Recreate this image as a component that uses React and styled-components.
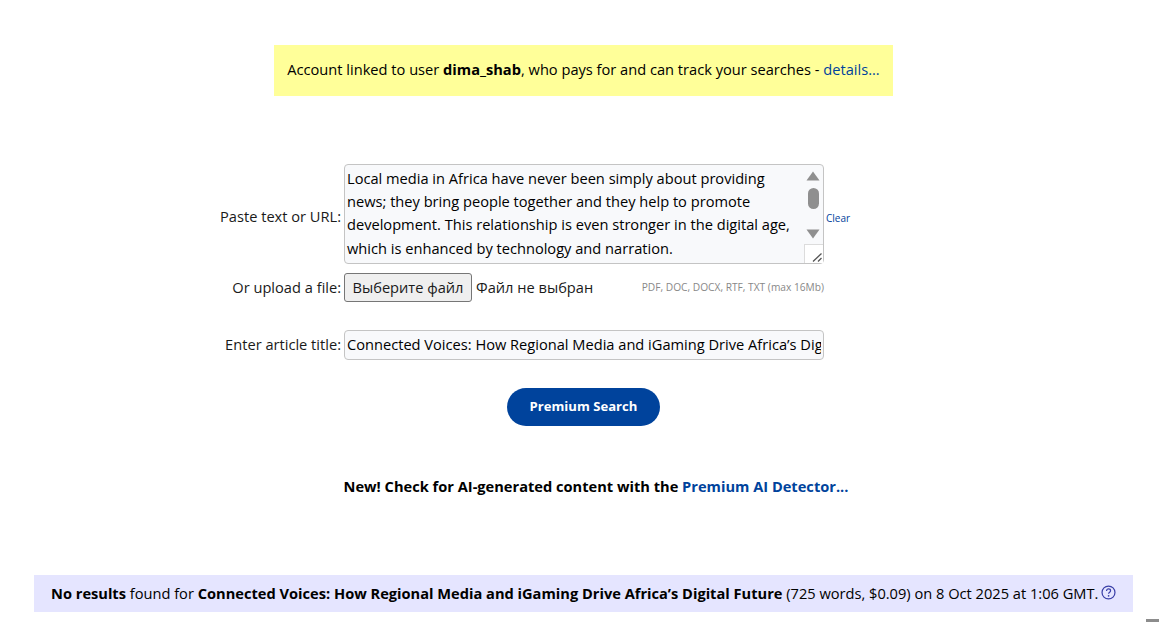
import React from "react";
import styled, { createGlobalStyle } from "styled-components";

const articleText =
  "Local media in Africa have never been simply about providing news; they bring people together and they help to promote development. This relationship is even stronger in the digital age, which is enhanced by technology and narration.\n\nAcross the continent, regional outlets keep communities informed.";

const App = () => {
  return (
    <>
      <GlobalStyle />
      <Page>
        <Notice>
          <span>
            Account linked to user <b>dima_shab</b>, who pays for and can track
            your searches - <NoticeLink href="#">details...</NoticeLink>
          </span>
        </Notice>

        <SearchForm onSubmit={(e) => e.preventDefault()}>
          <PasteLabel>Paste text or URL:</PasteLabel>
          <TextAreaWrap>
            <TextArea defaultValue={articleText} spellCheck={false} />
            <ScrollBar>
              <svg width="14" height="10" viewBox="0 0 14 10">
                <path d="M7 0.5 L13.5 9.5 H0.5 Z" fill="#8f8f8f" />
              </svg>
              <ScrollThumb />
              <ScrollSpacer />
              <svg width="14" height="10" viewBox="0 0 14 10">
                <path d="M0.5 0.5 H13.5 L7 9.5 Z" fill="#8f8f8f" />
              </svg>
            </ScrollBar>
            <ResizeCorner>
              <svg width="11" height="11" viewBox="0 0 11 11">
                <path
                  d="M1 9.5 L9.5 1.5 M6 9.5 L9.5 6"
                  stroke="#555"
                  strokeWidth="1.3"
                  fill="none"
                />
              </svg>
            </ResizeCorner>
          </TextAreaWrap>
          <ClearLink href="#">Clear</ClearLink>

          <UploadLabel>Or upload a file:</UploadLabel>
          <FileRow>
            <FileButton type="button">Выберите файл</FileButton>
            <FileName>Файл не выбран</FileName>
            <FileHint>PDF, DOC, DOCX, RTF, TXT (max 16Mb)</FileHint>
          </FileRow>
          <span />

          <TitleLabel>Enter article title:</TitleLabel>
          <TitleInput
            type="text"
            defaultValue="Connected Voices: How Regional Media and iGaming Drive Africa’s Digital Future"
          />
          <span />

          <SubmitButton type="submit">Premium Search</SubmitButton>
        </SearchForm>

        <Promo>
          New! Check for AI-generated content with the{" "}
          <PromoLink href="#">Premium AI Detector...</PromoLink>
        </Promo>

        <ResultBar>
          <span>
            <b>No results</b> found for{" "}
            <b>Connected Voices: How Regional Media and iGaming Drive Africa’s Digital Future</b>{" "}
            (725 words, $0.09) on 8 Oct 2025 at 1:06 GMT.
          </span>
          <HelpIcon viewBox="0 0 16 16" aria-hidden="true">
            <circle cx="8" cy="8" r="6.9" fill="none" stroke="#3a3fa8" strokeWidth="1.3" />
            <path
              d="M5.9 6.4 C5.9 5 7 4.2 8 4.2 C9.3 4.2 10.2 5 10.2 6.1 C10.2 7.6 8.1 7.7 8.1 9.4"
              fill="none"
              stroke="#3a3fa8"
              strokeWidth="1.3"
            />
            <circle cx="8.1" cy="11.5" r="0.9" fill="#3a3fa8" />
          </HelpIcon>
        </ResultBar>
      </Page>
      <CornerMark />
    </>
  );
};

export default App;

const GlobalStyle = createGlobalStyle`
  html, body {
    margin: 0;
    padding: 0;
    background: #fff;
    overflow: hidden;
  }
  body {
    font-family: "Open Sans", "Liberation Sans", sans-serif;
    font-size: 14.63px;
    color: #000;
  }
`;

const Page = styled.div`
  display: flex;
  flex-direction: column;
  align-items: center;
  width: 1099px;
  height: 622px;
  margin-left: 34px;
  padding-top: 45px;
  box-sizing: border-box;
`;

const Notice = styled.div`
  background: #ffff99;
  height: 51px;
  box-sizing: border-box;
  padding: 0 13.5px 4px;
  display: flex;
  align-items: center;
  b {
    font-weight: 700;
  }
`;

const NoticeLink = styled.a`
  color: #00439c;
  text-decoration: none;
`;

const SearchForm = styled.form`
  align-self: flex-start;
  display: grid;
  grid-template-columns: 307px 480px auto;
  column-gap: 3px;
  row-gap: 9px;
  align-items: center;
  margin-top: 68px;
`;

const FieldLabel = styled.label`
  text-align: right;
  color: #1a1a1a;
`;

const PasteLabel = styled(FieldLabel)`
  margin-top: 4px;
`;

const UploadLabel = styled(FieldLabel)`
  margin-bottom: 2px;
`;

const TitleLabel = styled(FieldLabel)`
  margin-top: 17px;
`;

const TextAreaWrap = styled.div`
  position: relative;
  height: 100px;
`;

const TextArea = styled.textarea`
  display: block;
  width: 100%;
  height: 100%;
  box-sizing: border-box;
  padding: 2px 30px 0 2px;
  border: 1px solid #c4c4c4;
  border-radius: 4px;
  background: #f8f9fb;
  font: 14.63px/23.2px "Open Sans", "Liberation Sans", sans-serif;
  color: #000;
  resize: none;
  overflow: hidden;
  outline: none;
`;

const ScrollBar = styled.div`
  position: absolute;
  top: 7px;
  right: 4px;
  width: 14px;
  height: 68px;
  display: flex;
  flex-direction: column;
  align-items: center;
`;

const ScrollThumb = styled.div`
  width: 11px;
  height: 21px;
  margin-top: 7px;
  border-radius: 6px;
  background: #8f8f8f;
`;

const ScrollSpacer = styled.div`
  flex: 1;
`;

const ResizeCorner = styled.div`
  position: absolute;
  right: 1px;
  bottom: 1px;
  width: 19px;
  height: 19px;
  box-sizing: border-box;
  border-top: 1px solid #dcdcdc;
  border-left: 1px solid #dcdcdc;
  background: #fff;
  display: flex;
  align-items: flex-end;
  justify-content: flex-end;
`;

const ClearLink = styled.a`
  font-size: 10px;
  color: #00439c;
  text-decoration: none;
  margin-top: 7px;
  margin-left: -1px;
`;

const FileRow = styled.div`
  display: flex;
  align-items: center;
  height: 29px;
`;

const FileButton = styled.button`
  height: 29px;
  width: 128px;
  padding: 0 0 2px;
  border: 1px solid #767676;
  border-radius: 3px;
  background: #efefef;
  font: 14.63px "Open Sans", "Liberation Sans", sans-serif;
  color: #1a1a1a;
`;

const FileName = styled.span`
  margin: 0 0 2px 4px;
  color: #1a1a1a;
`;

const FileHint = styled.span`
  margin: 0 0 2px auto;
  font-size: 10.2px;
  color: #888;
`;

const TitleInput = styled.input`
  width: 100%;
  height: 30px;
  margin-top: 19px;
  box-sizing: border-box;
  padding: 0 2px 2px;
  border: 1px solid #c4c4c4;
  border-radius: 4px;
  background: #f8f9fb;
  font: 14.63px "Open Sans", "Liberation Sans", sans-serif;
  color: #000;
  outline: none;
`;

const SubmitButton = styled.button`
  grid-column: 1 / -1;
  justify-self: start;
  margin: 19px 0 0 473px;
  width: 153px;
  height: 38px;
  padding: 0 0 2px;
  border: none;
  border-radius: 19px;
  background: #00439c;
  color: #fff;
  font: 700 13.1px "Open Sans", "Liberation Sans", sans-serif;
`;

const Promo = styled.div`
  margin-top: 49px;
  margin-left: 25px;
  font-weight: 700;
  line-height: 22px;
`;

const PromoLink = styled.a`
  color: #00439c;
  text-decoration: none;
`;

const ResultBar = styled.div`
  margin-top: auto;
  margin-bottom: 10px;
  width: 100%;
  height: 37px;
  box-sizing: border-box;
  padding: 0 0 2px 17px;
  background: #e5e5ff;
  display: flex;
  align-items: center;
  white-space: nowrap;
  b {
    font-weight: 700;
  }
`;

const HelpIcon = styled.svg`
  width: 15px;
  height: 15px;
  margin-left: 3px;
  flex: none;
`;

const CornerMark = styled.div`
  position: fixed;
  right: 0;
  bottom: 0;
  width: 13px;
  height: 3px;
  background: #8c8c8c;
`;
